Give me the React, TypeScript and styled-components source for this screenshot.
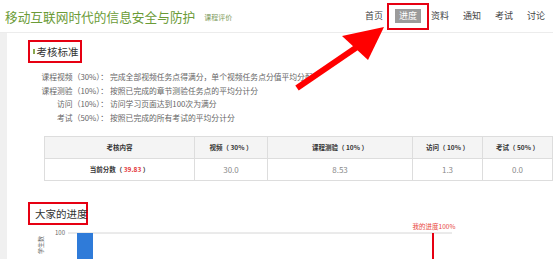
import React from 'react'
import styled, { createGlobalStyle } from 'styled-components'

const GlobalStyle = createGlobalStyle`
    html, body {
        margin: 0;
        padding: 0;
        background: #ffffff;
        font-family: "Noto Sans CJK SC", "Liberation Sans", sans-serif;
        overflow: hidden;
    }
`

const Page = styled.div`
    position: relative;
    width: 553px;
    height: 259px;
    overflow: hidden;
    background: #ffffff;
    display: flex;
    flex-direction: column;
`

const Header = styled.div`
    height: 32px;
    flex-shrink: 0;
    display: flex;
    align-items: center;
    justify-content: space-between;
    padding: 0 8px 0 5px;
    border-bottom: 1px solid #ececec;
`

const TitleGroup = styled.div`
    display: flex;
    align-items: center;
    gap: 9px;
`

const Title = styled.div`
    font-size: 12.7px;
    color: #6b9b37;
    white-space: nowrap;
`

const SubTitle = styled.div`
    font-size: 7px;
    color: #7d9a5c;
    margin-top: 2px;
`

const Nav = styled.div`
    display: flex;
    align-items: center;
    gap: 14px;
`

const NavItem = styled.div<{ $active?: boolean }>`
    font-size: 9px;
    line-height: 14px;
    color: ${({ $active }) => ($active ? '#ffffff' : '#444444')};
    background: ${({ $active }) => ($active ? '#9b9b9b' : 'transparent')};
    padding: ${({ $active }) => ($active ? '0 4px' : '0')};
    white-space: nowrap;
`

const NavMark = styled.div`
    display: flex;
    align-items: center;
    justify-content: center;
    box-sizing: border-box;
    width: 42px;
    height: 27px;
    margin: 0 -12px 0 -10px;
    border: 2px solid #e60012;
`

const Body = styled.div`
    flex: 1;
    display: flex;
    min-height: 0;
`

const Strip = styled.div`
    width: 7px;
    flex-shrink: 0;
    background: #f0f0f0;
`

const Main = styled.div`
    flex: 1;
    padding: 7px 0 0 21px;
    display: flex;
    flex-direction: column;
    align-items: flex-start;
`

const HeadingMark = styled.div<{ $width: number }>`
    box-sizing: border-box;
    width: ${({ $width }) => $width}px;
    height: 23px;
    border: 2px solid #e60012;
    display: flex;
    align-items: center;
    padding-left: 3px;
    gap: 2px;
`

const HeadingBar = styled.span`
    width: 1.5px;
    height: 5px;
    background: #8aa84e;
`

const HeadingText = styled.span`
    font-size: 10.5px;
    color: #333333;
    white-space: nowrap;
`

const Criteria = styled.div`
    margin: 7px 0 0 17px;
    display: grid;
    grid-template-columns: 63px auto;
    column-gap: 2px;
    font-size: 7.8px;
    line-height: 13.7px;
    color: #666666;
`

const CritLabel = styled.div`
    display: flex;
    justify-content: flex-end;
    white-space: nowrap;
`

const CritText = styled.div`
    white-space: nowrap;
`

const Table = styled.table`
    margin: 11px 0 0 16px;
    border-collapse: collapse;
    table-layout: fixed;
    width: 503px;
`

const Th = styled.th<{ $w: number }>`
    width: ${({ $w }) => $w}px;
    height: 21px;
    padding: 0;
    background: #f4f4f4;
    border: 1px solid #dddddd;
    font-size: 6.5px;
    font-weight: 700;
    color: #333333;
    white-space: nowrap;
`

const Td = styled.td<{ $bold?: boolean }>`
    height: 21px;
    padding: 0;
    text-align: center;
    border: 1px solid #dddddd;
    font-size: ${({ $bold }) => ($bold ? '6.5px' : '8px')};
    font-weight: ${({ $bold }) => ($bold ? 700 : 400)};
    color: ${({ $bold }) => ($bold ? '#333333' : '#8a8a8a')};
    white-space: nowrap;
`

const Score = styled.span`
    color: #e4393c;
`

const Section = styled.div`
    margin-top: 21px;
`

const ChartSvg = styled.svg`
    display: block;
    overflow: visible;
`

const Annotation = styled.svg`
    position: absolute;
    left: 0;
    top: 0;
    pointer-events: none;
`

const criteria = [
    { label: '课程视频（30%）：', text: '完成全部视频任务点得满分，单个视频任务点分值平均分配' },
    { label: '课程测验（10%）：', text: '按照已完成的章节测验任务点的平均分计分' },
    { label: '访问（10%）：', text: '访问学习页面达到100次为满分' },
    { label: '考试（50%）：', text: '按照已完成的所有考试的平均分计分' },
]

const columns = [
    { title: '考核内容', w: 149 },
    { title: '视频（ 30% ）', w: 72 },
    { title: '课程测验（ 10% ）', w: 144 },
    { title: '访问（ 10% ）', w: 69 },
    { title: '考试（ 50% ）', w: 69 },
]

const values = ['30.0', '8.53', '1.3', '0.0']

const navItems = ['首页', '进度', '资料', '通知', '考试', '讨论']

const ProgressChart = () => (
    <ChartSvg width={525} height={34} viewBox="0 0 525 34">
        <text x={15} y={20} fontSize={6} fill="#666" textAnchor="middle" transform="rotate(-90 15 20)">学生数</text>
        <text x={37} y={10} fontSize={6} fill="#666" textAnchor="end">100</text>
        <line x1={40} y1={8} x2={424} y2={8} stroke="#d6d6d6" strokeWidth={1} />
        <rect x={49} y={8} width={16} height={26} fill="#2f7bd9" />
        <line x1={405} y1={8} x2={405} y2={34} stroke="#e60012" strokeWidth={2} />
        <text x={406} y={4} fontSize={6.5} fill="#e8463c" textAnchor="middle">我的进度100%</text>
    </ChartSvg>
)

const App = () => {
    return (
        <Page>
            <GlobalStyle />
            <Header>
                <TitleGroup>
                    <Title>移动互联网时代的信息安全与防护</Title>
                    <SubTitle>课程评价</SubTitle>
                </TitleGroup>
                <Nav>
                    {navItems.map((item) =>
                        item === '进度' ? (
                            <NavMark key={item}>
                                <NavItem $active>{item}</NavItem>
                            </NavMark>
                        ) : (
                            <NavItem key={item}>{item}</NavItem>
                        )
                    )}
                </Nav>
            </Header>
            <Body>
                <Strip />
                <Main>
                    <HeadingMark $width={54}>
                        <HeadingBar />
                        <HeadingText>考核标准</HeadingText>
                    </HeadingMark>
                    <Criteria>
                        {criteria.map((c) => (
                            <React.Fragment key={c.label}>
                                <CritLabel>{c.label}</CritLabel>
                                <CritText>{c.text}</CritText>
                            </React.Fragment>
                        ))}
                    </Criteria>
                    <Table>
                        <thead>
                            <tr>
                                {columns.map((c) => (
                                    <Th key={c.title} $w={c.w}>{c.title}</Th>
                                ))}
                            </tr>
                        </thead>
                        <tbody>
                            <tr>
                                <Td $bold>当前分数（ <Score>39.83</Score> ）</Td>
                                {values.map((v, i) => (
                                    <Td key={i}>{v}</Td>
                                ))}
                            </tr>
                        </tbody>
                    </Table>
                    <Section>
                        <HeadingMark $width={60}>
                            <HeadingBar />
                            <HeadingText>大家的进度</HeadingText>
                        </HeadingMark>
                        <ProgressChart />
                    </Section>
                </Main>
            </Body>
            <Annotation width={553} height={259} viewBox="0 0 553 259">
                <line x1={297} y1={88} x2={360} y2={45} stroke="#f00" strokeWidth={6} />
                <polygon points="384,27 342,36 368,60" fill="#f00" />
            </Annotation>
        </Page>
    )
}

export default App
